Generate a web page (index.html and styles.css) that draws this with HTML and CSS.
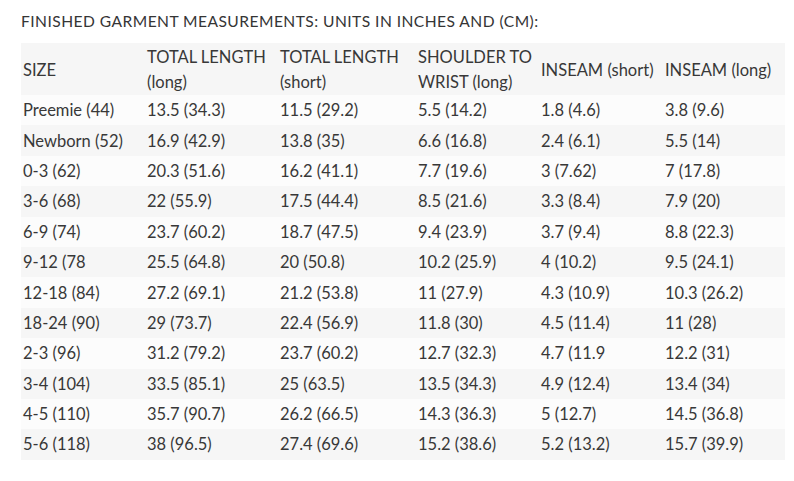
FILE: index.html
```html
<!DOCTYPE html>
<html>
<head>
<meta charset="utf-8">
<link rel="stylesheet" href="styles.css">
</head>
<body>
<div class="page">
  <h1 class="title">FINISHED GARMENT MEASUREMENTS: UNITS IN INCHES AND (CM):</h1>
  <table class="sizes">
    <colgroup>
      <col class="c1"><col class="c2"><col class="c3"><col class="c4"><col class="c5"><col class="c6">
    </colgroup>
    <thead>
      <tr>
        <th>SIZE</th>
        <th>TOTAL LENGTH<br><span class="sub">(long)</span></th>
        <th>TOTAL LENGTH<br><span class="sub">(short)</span></th>
        <th>SHOULDER TO<br>WRIST <span class="sub">(long)</span></th>
        <th>INSEAM <span class="sub">(short)</span></th>
        <th>INSEAM <span class="sub">(long)</span></th>
      </tr>
    </thead>
    <tbody>
      <tr><td>Preemie (44)</td><td>13.5 (34.3)</td><td>11.5 (29.2)</td><td>5.5 (14.2)</td><td>1.8 (4.6)</td><td>3.8 (9.6)</td></tr>
      <tr><td>Newborn (52)</td><td>16.9 (42.9)</td><td>13.8 (35)</td><td>6.6 (16.8)</td><td>2.4 (6.1)</td><td>5.5 (14)</td></tr>
      <tr><td>0-3 (62)</td><td>20.3 (51.6)</td><td>16.2 (41.1)</td><td>7.7 (19.6)</td><td>3 (7.62)</td><td>7 (17.8)</td></tr>
      <tr><td>3-6 (68)</td><td>22 (55.9)</td><td>17.5 (44.4)</td><td>8.5 (21.6)</td><td>3.3 (8.4)</td><td>7.9 (20)</td></tr>
      <tr><td>6-9 (74)</td><td>23.7 (60.2)</td><td>18.7 (47.5)</td><td>9.4 (23.9)</td><td>3.7 (9.4)</td><td>8.8 (22.3)</td></tr>
      <tr><td>9-12 (78</td><td>25.5 (64.8)</td><td>20 (50.8)</td><td>10.2 (25.9)</td><td>4 (10.2)</td><td>9.5 (24.1)</td></tr>
      <tr><td>12-18 (84)</td><td>27.2 (69.1)</td><td>21.2 (53.8)</td><td>11 (27.9)</td><td>4.3 (10.9)</td><td>10.3 (26.2)</td></tr>
      <tr><td>18-24 (90)</td><td>29 (73.7)</td><td>22.4 (56.9)</td><td>11.8 (30)</td><td>4.5 (11.4)</td><td>11 (28)</td></tr>
      <tr><td>2-3 (96)</td><td>31.2 (79.2)</td><td>23.7 (60.2)</td><td>12.7 (32.3)</td><td>4.7 (11.9</td><td>12.2 (31)</td></tr>
      <tr><td>3-4 (104)</td><td>33.5 (85.1)</td><td>25 (63.5)</td><td>13.5 (34.3)</td><td>4.9 (12.4)</td><td>13.4 (34)</td></tr>
      <tr><td>4-5 (110)</td><td>35.7 (90.7)</td><td>26.2 (66.5)</td><td>14.3 (36.3)</td><td>5 (12.7)</td><td>14.5 (36.8)</td></tr>
      <tr><td>5-6 (118)</td><td>38 (96.5)</td><td>27.4 (69.6)</td><td>15.2 (38.6)</td><td>5.2 (13.2)</td><td>15.7 (39.9)</td></tr>
    </tbody>
  </table>
</div>
</body>
</html>
```

FILE: styles.css
```css
html, body {
  margin: 0;
  padding: 0;
  background: #ffffff;
}
body {
  font-family: "Lato", "Open Sans", sans-serif;
  color: #383838;
}
.page {
  padding: 11px 7px 0 21px;
}
.title {
  margin: 0 0 12px 0;
  font-size: 15.6px;
  font-weight: 400;
  line-height: 20px;
  letter-spacing: 0.45px;
  color: #353535;
}
.sizes {
  border-collapse: collapse;
  table-layout: fixed;
  width: 764px;
  font-size: 16.5px;
}
.c1 { width: 124px; }
.c2 { width: 133px; }
.c3 { width: 138px; }
.c4 { width: 123px; }
.c5 { width: 124px; }
.c6 { width: 122px; }
.sizes th {
  font-weight: 400;
  text-align: left;
  vertical-align: middle;
  padding: 2px 0 0 2px;
  height: 49px;
  line-height: 25px;
  white-space: nowrap;
  font-size: 16.5px;
}
.sizes thead tr {
  background: #f6f6f6;
}
.sizes td {
  padding: 0 0 0 2px;
  height: 30.4px;
  line-height: 20px;
  vertical-align: middle;
  white-space: nowrap;
}
.sizes tbody tr:nth-child(odd) {
  background: #fcfcfc;
}
.sizes tbody tr:nth-child(even) {
  background: #f6f6f6;
}
```
